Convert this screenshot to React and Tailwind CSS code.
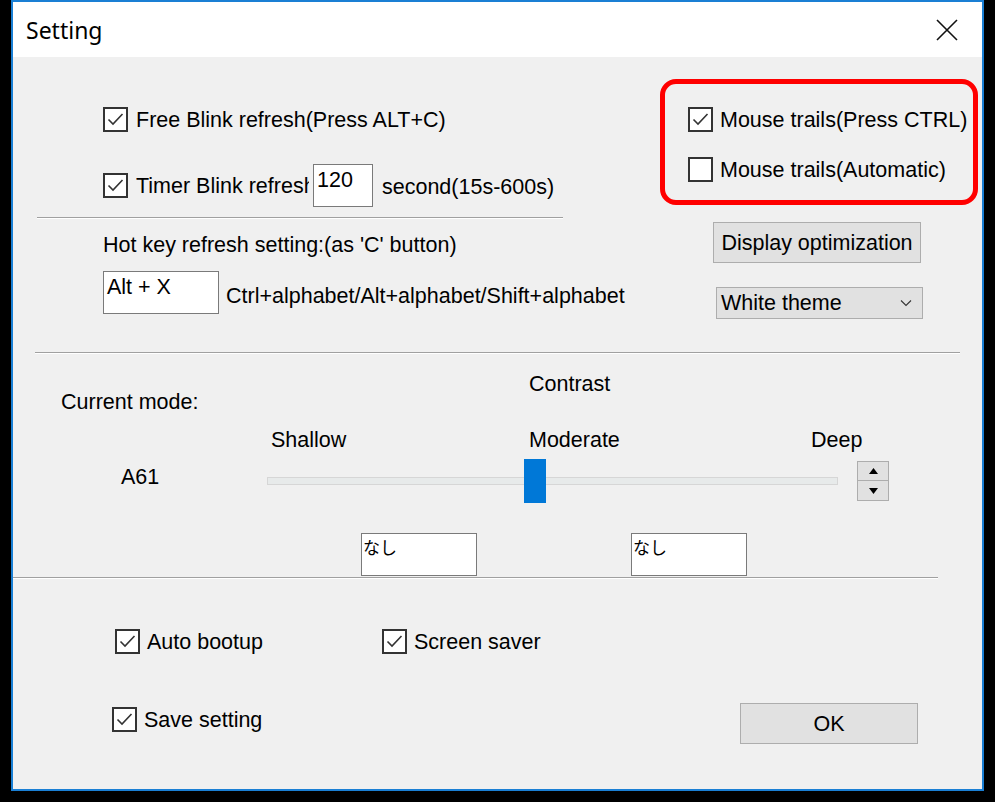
import React from 'react';

const font = { fontFamily: '"Liberation Sans", Arial, sans-serif' };

function CheckBox({ checked }) {
  return (
    <div className="w-[25px] h-[25px] shrink-0 border-2 border-[#333333] bg-white flex items-center justify-center">
      {checked && (
        <svg width="21" height="21" viewBox="0 0 21 21">
          <path d="M3.5 10.5 L8 15 L17.5 5" fill="none" stroke="#333333" strokeWidth="1.6" />
        </svg>
      )}
    </div>
  );
}

function Check({ checked, label, gap = 'gap-[8px]' }) {
  return (
    <div className={`flex items-center h-[25px] ${gap}`}>
      <CheckBox checked={checked} />
      <span className="whitespace-nowrap">{label}</span>
    </div>
  );
}

function Sep({ className }) {
  return <div className={`h-[2px] border-t border-[#a0a0a0] border-b border-b-white ${className}`} />;
}

function TextBox({ value, className }) {
  return (
    <div className={`shrink-0 whitespace-nowrap bg-white border border-[#7a7a7a] pl-[3px] pt-[3px] leading-[24px] ${className}`}>{value}</div>
  );
}

export default function App() {
  return (
    <div className="w-[995px] h-[802px] bg-black text-black text-[21.5px] leading-[24px]" style={font}>
      <div className="ml-[11px] w-[973px] h-[791px] border-2 border-[#1a7fd4] flex flex-col">
        {/* title bar */}
        <div className="h-[55px] bg-white flex items-center justify-between pl-[13px] pr-[24px]">
          <span className="text-[23px]" style={{ fontFamily: '"Noto Sans", "Open Sans", sans-serif' }}>Setting</span>
          <svg width="22" height="22" viewBox="0 0 22 22">
            <path d="M1 1 L21 21 M21 1 L1 21" stroke="#111" strokeWidth="1.6" fill="none" />
          </svg>
        </div>

        <div className="flex-1 bg-[#f0f0f0] flex flex-col">
          {/* top section */}
          <div className="h-[295px] flex">
            <div className="w-[552px] shrink-0 flex flex-col">
              <div className="mt-[50px] ml-[90px]">
                <Check checked label="Free Blink refresh(Press ALT+C)" />
              </div>
              <div className="mt-[32px] ml-[90px] h-[43px] flex items-center">
                <CheckBox checked />
                <span className="ml-[8px] w-[173px] shrink-0 overflow-hidden whitespace-nowrap">Timer Blink refresh</span>
                <TextBox value="120" className="ml-[4px] w-[60px] h-[43px]" />
                <span className="ml-[9px] mt-[3px] whitespace-nowrap">second(15s-600s)</span>
              </div>
              <Sep className="mt-[10px] ml-[24px] w-[526px]" />
              <div className="mt-[14px] ml-[90px] whitespace-nowrap">Hot key refresh setting:(as 'C' button)</div>
              <div className="mt-[14px] ml-[90px] flex items-center">
                <TextBox value="Alt + X" className="w-[116px] h-[43px]" />
                <span className="ml-[7px] mt-[7px] whitespace-nowrap">Ctrl+alphabet/Alt+alphabet/Shift+alphabet</span>
              </div>
            </div>

            <div className="flex-1 flex flex-col">
              <div className="mt-[22px] ml-[95px] w-[318px] h-[126px] border-[5px] border-[#ff0000] rounded-[16px] pl-[23px] pt-[23px] flex flex-col gap-[25px]">
                <Check checked label="Mouse trails(Press CTRL)" gap="gap-[7px]" />
                <Check label="Mouse trails(Automatic)" gap="gap-[7px]" />
              </div>
              <div className="mt-[17px] ml-[148px] w-[208px] h-[41px] bg-[#e1e1e1] border border-[#adadad] flex items-center justify-center whitespace-nowrap">
                Display optimization
              </div>
              <div className="mt-[24px] ml-[151px] w-[207px] h-[32px] bg-[#e1e1e1] border border-[#adadad] flex items-center justify-between pl-[4px] pr-[10px]">
                <span className="whitespace-nowrap">White theme</span>
                <svg width="12" height="8" viewBox="0 0 12 8">
                  <path d="M1 1.5 L6 6.5 L11 1.5" fill="none" stroke="#333" strokeWidth="1.1" />
                </svg>
              </div>
            </div>
          </div>
          <Sep className="ml-[22px] w-[925px]" />

          {/* contrast section */}
          <div className="h-[223px] flex">
            <div className="w-[254px] shrink-0 flex flex-col">
              <div className="mt-[36px] ml-[48px] whitespace-nowrap">Current mode:</div>
              <div className="mt-[51px] ml-[108px]">A61</div>
            </div>
            <div className="flex flex-col">
              <div className="mt-[18px] ml-[262px]">Contrast</div>
              <div className="mt-[32px] flex">
                <span className="ml-[4px] w-[258px] shrink-0">Shallow</span>
                <span className="w-[282px] shrink-0">Moderate</span>
                <span>Deep</span>
              </div>
              <div className="mt-[7px] h-[44px] flex items-center">
                <div className="relative shrink-0 w-[571px] h-[8px] bg-[#e7eaea] border border-[#d6d6d6]">
                  <div className="absolute left-[256px] top-[-19px] w-[22px] h-[44px] bg-[#0078d7]" />
                </div>
                <div className="ml-[19px] w-[32px] h-[40px] flex flex-col">
                  <div className="h-[20px] bg-[#e1e1e1] border border-[#adadad] flex items-center justify-center">
                    <svg width="9" height="6" viewBox="0 0 9 6"><path d="M0 6 L4.5 0 L9 6 Z" fill="#000" /></svg>
                  </div>
                  <div className="h-[20px] bg-[#e1e1e1] border border-t-0 border-[#adadad] flex items-center justify-center">
                    <svg width="9" height="6" viewBox="0 0 9 6"><path d="M0 0 L4.5 6 L9 0 Z" fill="#000" /></svg>
                  </div>
                </div>
              </div>
              <div className="mt-[30px] flex text-[17px]" style={{ fontFamily: '"Noto Sans CJK JP", sans-serif' }}>
                <div className="ml-[94px] w-[116px] h-[43px] bg-white border border-[#7a7a7a] pl-[1px] leading-[26px]">なし</div>
                <div className="ml-[154px] w-[116px] h-[43px] bg-white border border-[#7a7a7a] pl-[1px] leading-[26px]">なし</div>
              </div>
            </div>
          </div>
          <Sep className="w-[925px]" />

          {/* bottom section */}
          <div className="flex-1 flex flex-col">
            <div className="mt-[50px] ml-[102px] flex">
              <div className="w-[267px] shrink-0">
                <Check checked label="Auto bootup" gap="gap-[7px]" />
              </div>
              <Check checked label="Screen saver" gap="gap-[7px]" />
            </div>
            <div className="mt-[49px] flex items-start">
              <div className="ml-[99px] mt-[4px]">
                <Check checked label="Save setting" gap="gap-[7px]" />
              </div>
              <div className="ml-auto mr-[64px] w-[178px] h-[41px] bg-[#e1e1e1] border border-[#adadad] flex items-center justify-center">
                OK
              </div>
            </div>
          </div>
        </div>
      </div>
    </div>
  );
}
